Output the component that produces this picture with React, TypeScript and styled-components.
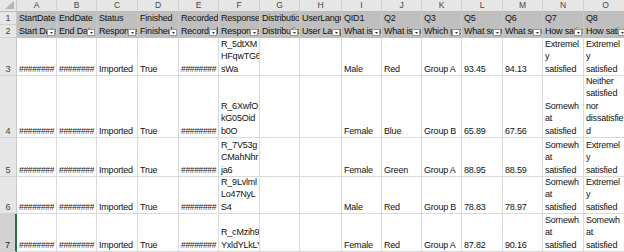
import React from "react";
import styled, { createGlobalStyle, css } from "styled-components";

const Global = createGlobalStyle`
  html, body { margin: 0; padding: 0; background: #ffffff; }
  body { width: 624px; height: 252px; overflow: hidden; }
`;

const COLS = [40, 40, 41, 41, 40, 41, 40, 42, 40, 40, 40, 41, 40, 41, 44];
const LETTERS = ["A", "B", "C", "D", "E", "F", "G", "H", "I", "J", "K", "L", "M", "N", "O"];
const ROWS = [12, 13, 13, 38, 62, 39, 37, 38];

const Sheet = styled.div`
  display: grid;
  grid-template-columns: 17px ${COLS.map((c) => `${c}px`).join(" ")};
  grid-template-rows: ${ROWS.map((r) => `${r}px`).join(" ")};
  width: 624px;
  height: 252px;
  overflow: hidden;
  font-family: "Liberation Sans", Arial, sans-serif;
  font-size: 9px;
  letter-spacing: -0.2px;
  color: #111;
`;

const Corner = styled.div`
  box-sizing: border-box;
  position: relative;
  background: #e6e6e6;
  border-right: 1px solid #c9c9c9;
  border-bottom: 1px solid #bdbdbd;
  &::after {
    content: "";
    position: absolute;
    right: 2px;
    bottom: 2px;
    width: 0;
    height: 0;
    border-left: 9px solid transparent;
    border-bottom: 8px solid #b5b5b5;
  }
`;

const ColHeader = styled.div`
  box-sizing: border-box;
  background: #e6e6e6;
  border-right: 1px solid #d0d0d0;
  border-bottom: 1px solid #bdbdbd;
  display: flex;
  align-items: center;
  justify-content: center;
  color: #444;
  font-size: 8.5px;
  letter-spacing: 0;
  line-height: 11px;
`;

const RowHeader = styled.div<{ $active?: boolean }>`
  box-sizing: border-box;
  background: #e6e6e6;
  border-right: 1px solid #c9c9c9;
  border-bottom: 1px solid #d0d0d0;
  display: flex;
  align-items: flex-end;
  justify-content: center;
  color: #444;
  font-size: 9px;
  line-height: 12.4px;
  letter-spacing: 0;
  ${(p) =>
    p.$active &&
    css`
      background: #d2d2d2;
      color: #222;
      border-right: 2px solid #217346;
    `}
`;

const TitleCell = styled.div`
  box-sizing: border-box;
  position: relative;
  background: #bfbfbf;
  border-right: 1px solid #c8c8c8;
  display: flex;
  align-items: center;
  padding: 0 0 0 2px;
  white-space: nowrap;
  overflow: hidden;
  line-height: 12.4px;
`;

const FilterButton = styled.span`
  position: absolute;
  right: 1px;
  bottom: 2px;
  width: 8px;
  height: 7px;
  box-sizing: border-box;
  background: #ffffff;
  border: 1px solid #9a9a9a;
  display: flex;
  align-items: center;
  justify-content: center;
`;

const DataCell = styled.div`
  box-sizing: border-box;
  border-right: 1px solid #dadada;
  border-bottom: 1px solid #dadada;
  display: flex;
  flex-direction: column;
  justify-content: flex-end;
  padding: 0 0 0 2px;
  overflow: hidden;
  line-height: 12.4px;
  white-space: nowrap;
`;

const Line = styled.span<{ $hash?: boolean }>`
  display: block;
  ${(p) =>
    p.$hash &&
    css`
      font-size: 8.5px;
      letter-spacing: -0.35px;
      color: #222;
    `}
`;

const row1 = ["StartDate", "EndDate", "Status", "Finished", "RecordedDate", "ResponseId", "DistributionChannel", "UserLanguage", "QID1", "Q2", "Q3", "Q5", "Q6", "Q7", "Q8"];
const row2 = ["Start Date", "End Date", "Response Type", "Finished", "Recorded Date", "Response ID", "Distribution Channel", "User Language", "What is your gender?", "What is your favorite color?", "Which group are you in?", "What score did you get?", "What score did you get?", "How satisfied are you?", "How satisfied are you?"];

const H = "########";
type Cell = string | string[];
const data: Cell[][] = [
  [H, H, "Imported", "True", H, ["R_5dtXM", "HFqwTG6", "sWa"], "", "", "Male", "Red", "Group A", "93.45", "94.13", ["Extremel", "y", "satisfied"], ["Extremel", "y", "satisfied"]],
  [H, H, "Imported", "True", H, ["R_6XwfO", "kG05Oid", "b0O"], "", "", "Female", "Blue", "Group B", "65.89", "67.56", ["Somewh", "at", "satisfied"], ["Neither", "satisfied", "nor", "dissatisfie", "d"]],
  [H, H, "Imported", "True", H, ["R_7V53g", "CMahNhr", "ja6"], "", "", "Female", "Green", "Group A", "88.95", "88.59", ["Somewh", "at", "satisfied"], ["Extremel", "y", "satisfied"]],
  [H, H, "Imported", "True", H, ["R_9Lvlml", "Lo47NyL", "S4"], "", "", "Male", "Red", "Group B", "78.83", "78.97", ["Somewh", "at", "satisfied"], ["Extremel", "y", "satisfied"]],
  [H, H, "Imported", "True", H, ["R_cMzih9", "YxldYLkLY"], "", "", "Female", "Red", "Group A", "87.82", "90.16", ["Somewh", "at", "satisfied"], ["Somewh", "at", "satisfied"]],
];

const Arrow = () => (
  <svg width="3" height="2" viewBox="0 0 3 2">
    <path d="M0 0 L3 0 L1.5 2 Z" fill="#333" />
  </svg>
);

export default function App() {
  return (
    <>
      <Global />
      <Sheet>
        <Corner />
        {LETTERS.map((l) => (
          <ColHeader key={l}>{l}</ColHeader>
        ))}

        <RowHeader>1</RowHeader>
        {row1.map((t, i) => (
          <TitleCell key={`r1-${i}`}>{t}</TitleCell>
        ))}

        <RowHeader>2</RowHeader>
        {row2.map((t, i) => (
          <TitleCell key={`r2-${i}`}>
            {t}
            <FilterButton>
              <Arrow />
            </FilterButton>
          </TitleCell>
        ))}

        {data.map((row, r) => (
          <React.Fragment key={`d${r}`}>
            <RowHeader $active={r === 4}>{r + 3}</RowHeader>
            {row.map((cell, c) => (
              <DataCell key={`d${r}-${c}`}>
                {(Array.isArray(cell) ? cell : [cell]).map((ln, k) => (
                  <Line key={k} $hash={ln === H}>
                    {ln}
                  </Line>
                ))}
              </DataCell>
            ))}
          </React.Fragment>
        ))}
      </Sheet>
    </>
  );
}
